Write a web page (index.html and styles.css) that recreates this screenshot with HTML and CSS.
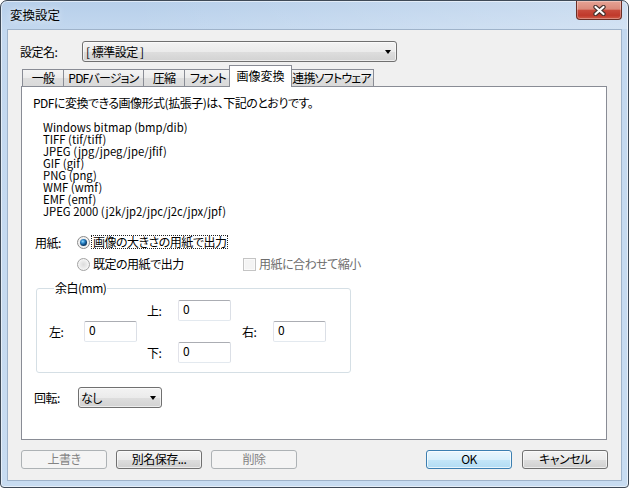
FILE: index.html
```html
<!DOCTYPE html>
<html lang="ja">
<head>
<meta charset="utf-8">
<title>変換設定</title>
<link rel="stylesheet" href="styles.css">
</head>
<body>
<div class="window">
  <div class="titlebar">
    <span class="title">変換設定</span>
    <div class="close">
      <svg width="13" height="11" viewBox="0 0 13 11">
        <path d="M2.5 2 L10.5 9 M10.5 2 L2.5 9" stroke="#4a3430" stroke-width="4.4" stroke-linecap="round" fill="none"/>
        <path d="M2.5 2 L10.5 9 M10.5 2 L2.5 9" stroke="#ffffff" stroke-width="2.2" stroke-linecap="round" fill="none"/>
      </svg>
    </div>
  </div>
  <div class="client">
    <div class="name-row">
      <span class="name-label">設定名:</span>
      <div class="combo combo-name"><span>[ 標準設定 ]</span><span class="arrow"></span></div>
    </div>
    <div class="tabs">
      <div class="tab t1">一般</div>
      <div class="tab t2">PDFバージョン</div>
      <div class="tab t3">圧縮</div>
      <div class="tab t4">フォント</div>
      <div class="tab sel">画像変換</div>
      <div class="tab t6">連携ソフトウェア</div>
    </div>
    <div class="panel">
      <p class="intro">PDFに変換できる画像形式(拡張子)は、下記のとおりです。</p>
      <ul class="formats">
        <li>Windows bitmap (bmp/dib)</li>
        <li>TIFF (tif/tiff)</li>
        <li>JPEG (jpg/jpeg/jpe/jfif)</li>
        <li>GIF (gif)</li>
        <li>PNG (png)</li>
        <li>WMF (wmf)</li>
        <li>EMF (emf)</li>
        <li>JPEG 2000 (j2k/jp2/jpc/j2c/jpx/jpf)</li>
      </ul>
      <div class="paper-row first">
        <span class="field-label">用紙:</span>
        <span class="radio checked"></span>
        <span class="opt focus">画像の大きさの用紙で出力</span>
      </div>
      <div class="paper-row second">
        <span class="radio"></span>
        <span class="opt opt-wide">既定の用紙で出力</span>
        <span class="check"></span>
        <span class="opt disabled">用紙に合わせて縮小</span>
      </div>
      <fieldset class="margins">
        <legend>余白(mm)</legend>
        <div class="mgrid">
          <span class="mlabel top-l">上:</span>
          <div class="tb top-i">0</div>
          <span class="mlabel left-l">左:</span>
          <div class="tb left-i">0</div>
          <span class="mlabel right-l">右:</span>
          <div class="tb right-i">0</div>
          <span class="mlabel bottom-l">下:</span>
          <div class="tb bottom-i">0</div>
        </div>
      </fieldset>
      <div class="rotate-row">
        <span class="rot-label">回転:</span>
        <div class="combo combo-rot"><span>なし</span><span class="arrow"></span></div>
      </div>
    </div>
    <div class="buttons">
      <div class="btn disabled">上書き</div>
      <div class="btn">別名保存...</div>
      <div class="btn disabled">削除</div>
      <div class="btn default push">OK</div>
      <div class="btn">キャンセル</div>
    </div>
  </div>
</div>
</body>
</html>
```
FILE: styles.css
```css
html, body {
  margin: 0;
  padding: 0;
}
body {
  width: 629px;
  height: 488px;
  overflow: hidden;
  font-family: "Noto Sans CJK JP", "Liberation Sans", sans-serif;
  font-size: 12px;
  font-feature-settings: "palt";
  letter-spacing: -0.5px;
  color: #000;
  background: #fff;
}
.window {
  box-sizing: border-box;
  width: 629px;
  height: 488px;
  border: 1px solid #3f4a57;
  border-radius: 7px 7px 4px 4px;
  background: linear-gradient(180deg, #b7cfea 0px, #c3d8ef 30px, #c8dcf1 100%);
  box-shadow: inset 0 0 0 1px rgba(255,255,255,0.55);
  display: flex;
  flex-direction: column;
  overflow: hidden;
}
.titlebar {
  height: 28px;
  flex: none;
  display: flex;
  justify-content: space-between;
  align-items: flex-start;
  background: linear-gradient(90deg, rgba(255,255,255,0) 20%, rgba(255,255,255,0.28) 100%);
  border-radius: 6px 6px 0 0;
}
.title {
  margin: 6px 0 0 9px;
  line-height: 16px;
  font-size: 12.5px;
  letter-spacing: 0;
  text-shadow: 0 0 6px rgba(255,255,255,0.9);
}
.close {
  box-sizing: border-box;
  width: 46px;
  height: 19px;
  margin-right: 6px;
  border: 1px solid #6b2e25;
  border-top: none;
  border-radius: 0 0 4px 4px;
  background: linear-gradient(180deg, #e6a395 0%, #db8a7b 45%, #c84a3b 52%, #c0392b 80%, #cf5c48 100%);
  box-shadow: inset 0 0 0 1px rgba(255,255,255,0.3);
  display: flex;
  align-items: center;
  justify-content: center;
}
.client {
  flex: 1;
  margin: 0 6px 6px 6px;
  border: 1px solid #9fb3ca;
  background: #f0f0f0;
  display: flex;
  flex-direction: column;
  padding: 11px 0 11px 0;
  min-height: 0;
}
.name-row {
  display: flex;
  align-items: center;
  height: 21px;
  padding-left: 12px;
  flex: none;
}
.name-label {
  width: 62px;
}
.combo {
  box-sizing: border-box;
  height: 21px;
  border: 1px solid #707070;
  border-radius: 3px;
  background: linear-gradient(180deg, #f3f3f3 0%, #ebebeb 50%, #dedede 51%, #d2d2d2 100%);
  box-shadow: inset 0 0 0 1px rgba(255,255,255,0.6);
  display: flex;
  align-items: center;
  justify-content: space-between;
  padding: 0 5px 0 3px;
  line-height: 14px;
}
.combo-name {
  width: 315px;
}
.combo-rot {
  width: 84px;
  padding-left: 2px;
}
.arrow {
  width: 0;
  height: 0;
  border-top: 4px solid #000;
  border-left: 3.5px solid transparent;
  border-right: 3.5px solid transparent;
}
.tabs {
  flex: none;
  display: flex;
  align-items: flex-end;
  height: 21px;
  margin-top: 3px;
  padding-left: 14px;
  position: relative;
  z-index: 1;
}
.tab {
  box-sizing: border-box;
  height: 17px;
  border: 1px solid #898c95;
  border-bottom: none;
  margin-left: -1px;
  background: linear-gradient(180deg, #f4f4f4 0%, #ebebeb 50%, #dedede 51%, #dadada 100%);
  text-align: center;
  line-height: 15px;
  white-space: nowrap;
  letter-spacing: -0.8px;
}
.t1 { width: 42px; margin-left: 0; }
.t2 { width: 81px; }
.t3 { width: 42px; }
.t4 { width: 48px; }
.t6 { width: 85px; }
.tab.sel {
  width: 63px;
  height: 22px;
  margin-left: -3px;
  margin-right: -2px;
  margin-bottom: -1px;
  background: #fff;
  position: relative;
  z-index: 2;
  line-height: 19px;
  letter-spacing: 0;
}
.panel {
  flex: 1;
  min-height: 0;
  margin: 0 14px 0 13px;
  border: 1px solid #898c95;
  background: #fff;
  padding-top: 9px;
  box-sizing: border-box;
}
.intro {
  margin: 0 0 0 11px;
  line-height: 14px;
}
.formats {
  margin: 11px 0 0 21px;
  padding: 0;
  list-style: none;
  font-size: 11.3px;
  line-height: 12px;
  letter-spacing: 0;
}
.paper-row {
  display: flex;
  align-items: center;
  height: 14px;
  margin-left: 13px;
}
.paper-row.first {
  margin-top: 18px;
}
.paper-row.second {
  margin-top: 8px;
  padding-left: 42px;
}
.field-label {
  width: 42px;
}
.radio {
  box-sizing: border-box;
  width: 13px;
  height: 13px;
  border-radius: 50%;
  border: 1px solid #a2a2a2;
  background: radial-gradient(circle at 50% 50%, #dcdcdc 0, #e9e9e9 3px, #f6f6f6 6px);
  box-shadow: inset 0 0 0 1px #f4f4f4;
  display: flex;
  align-items: center;
  justify-content: center;
  flex: none;
}
.radio.checked {
  border-color: #8a8a8a;
}
.radio.checked::after {
  content: "";
  width: 7px;
  height: 7px;
  border-radius: 50%;
  background: radial-gradient(circle at 40% 35%, #9fdcfb 0, #3b97d8 1.5px, #165d99 3px, #0d3d6a 4px);
}
.opt {
  margin-left: 2px;
  padding: 0 1px;
  line-height: 12px;
}
.opt.focus {
  outline: 1px dotted #222;
}
.opt-wide {
  width: 151px;
  box-sizing: border-box;
}
.check {
  box-sizing: border-box;
  width: 13px;
  height: 13px;
  border: 1px solid #c4c4c4;
  background: #f4f4f4;
  box-shadow: inset 0 0 0 1px #fafafa;
  flex: none;
}
.opt.disabled {
  color: #6d6d6d;
}
.margins {
  box-sizing: border-box;
  width: 315px;
  margin: 10px 0 0 14px;
  border: 1px solid #d5dfe5;
  border-radius: 3px;
  padding: 5px 0 9px 12px;
  min-width: 0;
}
.margins legend {
  margin-left: 5px;
  padding: 0 1px;
  line-height: 14px;
}
.mgrid {
  display: grid;
  grid-template-columns: 35px 53px 41px 53px 42px 53px;
  grid-template-rows: 21px 21px 21px;
  align-items: center;
}
.mlabel {
  line-height: 14px;
}
.tb {
  box-sizing: border-box;
  width: 53px;
  height: 21px;
  border: 1px solid #abadb3;
  border-color: #abadb3 #dbdfe6 #e3e9ef #e2e3ea;
  border-radius: 2px;
  background: #fff;
  padding: 0 0 0 4px;
  line-height: 15px;
}
.top-l { grid-row: 1; grid-column: 3; padding-left: 10px; }
.top-i { grid-row: 1; grid-column: 4; }
.left-l { grid-row: 2; grid-column: 1; }
.left-i { grid-row: 2; grid-column: 2; }
.right-l { grid-row: 2; grid-column: 5; padding-left: 11px; }
.right-i { grid-row: 2; grid-column: 6; }
.bottom-l { grid-row: 3; grid-column: 3; padding-left: 10px; }
.bottom-i { grid-row: 3; grid-column: 4; }
.rotate-row {
  display: flex;
  align-items: center;
  margin: 14px 0 0 12px;
  height: 21px;
}
.rot-label {
  width: 44px;
}
.buttons {
  flex: none;
  display: flex;
  height: 19px;
  margin-top: 10px;
  padding: 0 13px;
  gap: 9px;
}
.btn {
  box-sizing: border-box;
  width: 86px;
  height: 19px;
  border: 1px solid #707070;
  border-radius: 3px;
  background: linear-gradient(180deg, #f3f3f3 0%, #ebebeb 50%, #dedede 51%, #d0d0d0 100%);
  box-shadow: inset 0 0 0 1px rgba(255,255,255,0.6);
  text-align: center;
  line-height: 16px;
}
.btn.disabled {
  border-color: #adb2b5;
  background: #f4f4f4;
  box-shadow: none;
  color: #838383;
}
.btn.default {
  border-color: #3c7fb1;
  background: linear-gradient(180deg, #eaf6fd 0%, #d9f0fc 50%, #c4e6f8 51%, #b1dcf4 100%);
  box-shadow: inset 0 0 0 1px rgba(255,255,255,0.7);
}
.btn.push {
  margin-left: auto;
  margin-right: 1px;
}
```
